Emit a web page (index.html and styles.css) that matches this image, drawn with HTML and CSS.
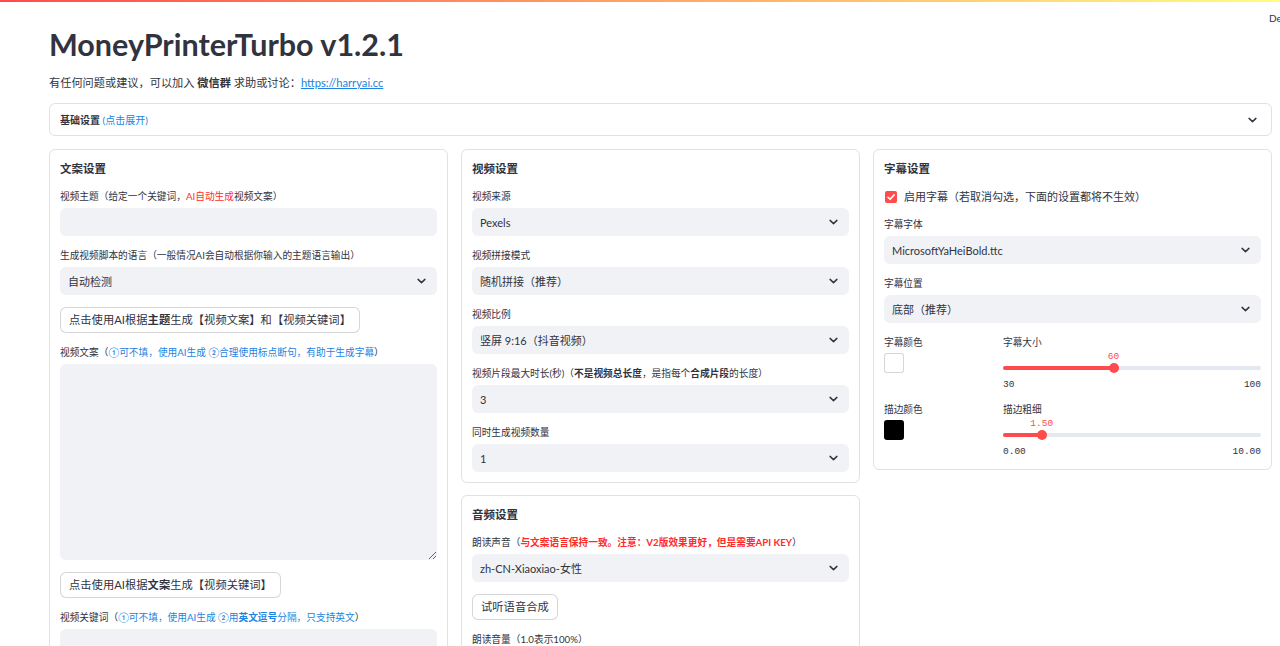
FILE: index.html
```html
<!DOCTYPE html>
<html lang="zh">
<head>
<meta charset="utf-8">
<title>MoneyPrinterTurbo</title>
<link rel="stylesheet" href="styles.css">
</head>
<body>
<div class="decoration"></div>
<div class="toolbar"><span class="deploy">Deploy</span></div>
<main class="main">
  <h1 class="title">MoneyPrinterTurbo v1.2.1</h1>
  <p class="intro">有任何问题或建议，可以加入 <b>微信群</b> 求助或讨论：<a class="link" href="#">https://harryai.cc</a></p>

  <div class="expander">
    <span class="exp-title"><b>基础设置</b> <span class="blue">(点击展开)</span></span>
    <svg class="chev" viewBox="0 0 10 6" width="9" height="6"><path d="M1.2 1.2l3.8 3.6 3.8-3.6" fill="none" stroke="#31333f" stroke-width="1.6" stroke-linecap="round" stroke-linejoin="round"/></svg>
  </div>

  <div class="columns">
    <!-- left column -->
    <div class="col">
      <section class="card">
        <h3 class="card-title">文案设置</h3>
        <div class="field">
          <div class="label">视频主题（给定一个关键词，<span class="red">AI自动生成</span>视频文案）</div>
          <div class="input"></div>
        </div>
        <div class="field">
          <div class="label">生成视频脚本的语言（一般情况AI会自动根据你输入的主题语言输出）</div>
          <div class="select"><span>自动检测</span><svg class="chev" viewBox="0 0 10 6" width="9" height="6"><path d="M1.2 1.2l3.8 3.6 3.8-3.6" fill="none" stroke="#31333f" stroke-width="1.6" stroke-linecap="round" stroke-linejoin="round"/></svg></div>
        </div>
        <button class="btn">点击使用AI根据<b>主题</b>生成【视频文案】和【视频关键词】</button>
        <div class="field">
          <div class="label">视频文案（<span class="blue">①可不填，使用AI生成 ②合理使用标点断句，有助于生成字幕</span>）</div>
          <textarea class="textarea"></textarea>
        </div>
        <button class="btn">点击使用AI根据<b>文案</b>生成【视频关键词】</button>
        <div class="field">
          <div class="label">视频关键词（<span class="blue">①可不填，使用AI生成 ②用<b>英文逗号</b>分隔，只支持英文</span>）</div>
          <div class="input tall"></div>
        </div>
      </section>
    </div>

    <!-- middle column -->
    <div class="col">
      <section class="card">
        <h3 class="card-title">视频设置</h3>
        <div class="field">
          <div class="label">视频来源</div>
          <div class="select"><span>Pexels</span><svg class="chev" viewBox="0 0 10 6" width="9" height="6"><path d="M1.2 1.2l3.8 3.6 3.8-3.6" fill="none" stroke="#31333f" stroke-width="1.6" stroke-linecap="round" stroke-linejoin="round"/></svg></div>
        </div>
        <div class="field">
          <div class="label">视频拼接模式</div>
          <div class="select"><span>随机拼接（推荐）</span><svg class="chev" viewBox="0 0 10 6" width="9" height="6"><path d="M1.2 1.2l3.8 3.6 3.8-3.6" fill="none" stroke="#31333f" stroke-width="1.6" stroke-linecap="round" stroke-linejoin="round"/></svg></div>
        </div>
        <div class="field">
          <div class="label">视频比例</div>
          <div class="select"><span>竖屏 9:16（抖音视频）</span><svg class="chev" viewBox="0 0 10 6" width="9" height="6"><path d="M1.2 1.2l3.8 3.6 3.8-3.6" fill="none" stroke="#31333f" stroke-width="1.6" stroke-linecap="round" stroke-linejoin="round"/></svg></div>
        </div>
        <div class="field">
          <div class="label">视频片段最大时长(秒)（<b>不是视频总长度</b>，是指每个<b>合成片段</b>的长度）</div>
          <div class="select"><span>3</span><svg class="chev" viewBox="0 0 10 6" width="9" height="6"><path d="M1.2 1.2l3.8 3.6 3.8-3.6" fill="none" stroke="#31333f" stroke-width="1.6" stroke-linecap="round" stroke-linejoin="round"/></svg></div>
        </div>
        <div class="field">
          <div class="label">同时生成视频数量</div>
          <div class="select"><span>1</span><svg class="chev" viewBox="0 0 10 6" width="9" height="6"><path d="M1.2 1.2l3.8 3.6 3.8-3.6" fill="none" stroke="#31333f" stroke-width="1.6" stroke-linecap="round" stroke-linejoin="round"/></svg></div>
        </div>
      </section>

      <section class="card">
        <h3 class="card-title">音频设置</h3>
        <div class="field">
          <div class="label">朗读声音（<b class="red">与文案语言保持一致。注意：V2版效果更好，但是需要API KEY</b>）</div>
          <div class="select"><span>zh-CN-Xiaoxiao-女性</span><svg class="chev" viewBox="0 0 10 6" width="9" height="6"><path d="M1.2 1.2l3.8 3.6 3.8-3.6" fill="none" stroke="#31333f" stroke-width="1.6" stroke-linecap="round" stroke-linejoin="round"/></svg></div>
        </div>
        <button class="btn">试听语音合成</button>
        <div class="field">
          <div class="label">朗读音量（1.0表示100%）</div>
          <div class="select"><span>1.0</span><svg class="chev" viewBox="0 0 10 6" width="9" height="6"><path d="M1.2 1.2l3.8 3.6 3.8-3.6" fill="none" stroke="#31333f" stroke-width="1.6" stroke-linecap="round" stroke-linejoin="round"/></svg></div>
        </div>
      </section>
    </div>

    <!-- right column -->
    <div class="col">
      <section class="card card-sub">
        <h3 class="card-title">字幕设置</h3>
        <div class="check-row">
          <span class="checkbox"><svg viewBox="0 0 12 12" width="12" height="12"><path d="M3 6.2l2.1 2.1 4-4.4" fill="none" stroke="#fff" stroke-width="1.6" stroke-linecap="round" stroke-linejoin="round"/></svg></span>
          <span>启用字幕（若取消勾选，下面的设置都将不生效）</span>
        </div>
        <div class="field">
          <div class="label">字幕字体</div>
          <div class="select"><span>MicrosoftYaHeiBold.ttc</span><svg class="chev" viewBox="0 0 10 6" width="9" height="6"><path d="M1.2 1.2l3.8 3.6 3.8-3.6" fill="none" stroke="#31333f" stroke-width="1.6" stroke-linecap="round" stroke-linejoin="round"/></svg></div>
        </div>
        <div class="field">
          <div class="label">字幕位置</div>
          <div class="select"><span>底部（推荐）</span><svg class="chev" viewBox="0 0 10 6" width="9" height="6"><path d="M1.2 1.2l3.8 3.6 3.8-3.6" fill="none" stroke="#31333f" stroke-width="1.6" stroke-linecap="round" stroke-linejoin="round"/></svg></div>
        </div>
        <div class="subgrid">
          <div class="field">
            <div class="label">字幕颜色</div>
            <div class="swatch swatch-white"></div>
          </div>
          <div class="slider">
            <div class="label">字幕大小</div>
            <div class="value-area"><span class="value" style="left:42.857%">60</span></div>
            <div class="track">
              <div class="rail"></div>
              <div class="fill" style="width:42.857%"></div>
              <div class="thumb" style="left:42.857%"></div>
            </div>
            <div class="ticks"><span>30</span><span>100</span></div>
          </div>
          <div class="field">
            <div class="label">描边颜色</div>
            <div class="swatch swatch-black"></div>
          </div>
          <div class="slider">
            <div class="label">描边粗细</div>
            <div class="value-area"><span class="value" style="left:15%">1.50</span></div>
            <div class="track">
              <div class="rail"></div>
              <div class="fill" style="width:15%"></div>
              <div class="thumb" style="left:15%"></div>
            </div>
            <div class="ticks"><span>0.00</span><span>10.00</span></div>
          </div>
        </div>
      </section>
    </div>
  </div>
</main>
</body>
</html>
```

FILE: styles.css
```css
* { box-sizing: border-box; }

html, body {
  margin: 0;
  height: 100%;
  overflow: hidden;
}

body {
  font-family: "Lato", "Noto Sans CJK SC", sans-serif;
  color: #31333f;
  background: #ffffff;
}

.decoration {
  height: 2px;
  background: linear-gradient(90deg, #ff4b4b, #fffd80);
}

.toolbar {
  position: absolute;
  top: 11px;
  left: 1269px;
  font-size: 10px;
  line-height: 14px;
  white-space: nowrap;
  color: #31333f;
}

.main {
  padding: 22px 8px 0 49px;
}

.title {
  margin: 0;
  font-size: 30.5px;
  line-height: 40px;
  font-weight: 700;
  color: #31333f;
}

.intro {
  margin: 11px 0 0;
  font-size: 11.2px;
  line-height: 16px;
}

.intro b { font-weight: 700; }

.link {
  color: #1c83e1;
  text-decoration: underline;
}

.blue { color: #1c83e1; }
.red { color: #ff2b2b; }

.expander {
  margin-top: 12px;
  height: 33px;
  border: 1px solid rgba(49, 51, 63, 0.15);
  border-radius: 6px;
  display: flex;
  align-items: center;
  justify-content: space-between;
  padding: 0 14px 0 10px;
  font-size: 10px;
  line-height: 14px;
}

.exp-title b { font-weight: 700; }

.columns {
  margin-top: 13px;
  display: grid;
  grid-template-columns: repeat(3, 1fr);
  column-gap: 13px;
  align-items: start;
}

.col {
  display: flex;
  flex-direction: column;
  gap: 12px;
}

.card {
  border: 1px solid rgba(49, 51, 63, 0.15);
  border-radius: 6px;
  padding: 10px 10px 10px;
  display: flex;
  flex-direction: column;
  gap: 13px;
}

.card-title {
  margin: 0;
  font-size: 11.5px;
  line-height: 17px;
  font-weight: 700;
}

.field {
  display: flex;
  flex-direction: column;
}

.label {
  font-size: 9.7px;
  line-height: 13px;
  margin-bottom: 5px;
  white-space: nowrap;
}

.label b { font-weight: 700; }

.input {
  height: 28px;
  background: #f0f2f6;
  border-radius: 6px;
}

.input.tall { height: 60px; }

.select {
  height: 28px;
  background: #f0f2f6;
  border-radius: 6px;
  display: flex;
  align-items: center;
  justify-content: space-between;
  padding: 0 11px 0 8px;
  font-size: 11px;
}

.chev { display: block; flex: none; }

.textarea {
  display: block;
  width: 100%;
  height: 196px;
  background: #f0f2f6;
  border: none;
  border-radius: 6px;
  resize: vertical;
  margin: 0;
  font: inherit;
}

.btn {
  align-self: flex-start;
  height: 26px;
  margin-top: -1px;
  padding: 0 8px;
  background: #ffffff;
  border: 1px solid rgba(49, 51, 63, 0.2);
  border-radius: 6px;
  font-family: inherit;
  font-size: 11.3px;
  color: #31333f;
  line-height: 1;
  display: inline-flex;
  align-items: center;
}

.btn b { font-weight: 700; }

.check-row {
  display: flex;
  align-items: center;
  gap: 7px;
  font-size: 11px;
  line-height: 14px;
  padding-left: 1px;
  margin-bottom: 1px;
}

.checkbox {
  width: 12px;
  height: 12px;
  background: #ff4b4b;
  border-radius: 2px;
  display: flex;
  flex: none;
}

.subgrid {
  display: grid;
  grid-template-columns: 106px 1fr;
  column-gap: 13px;
  row-gap: 13px;
}

.subgrid .label { margin-bottom: 4px; }

.swatch {
  width: 20px;
  height: 20px;
  border-radius: 3px;
}

.swatch-white {
  background: #ffffff;
  border: 1px solid rgba(49, 51, 63, 0.2);
}

.swatch-black {
  background: #000000;
}

.slider .label { margin-bottom: 0; }

.value-area {
  position: relative;
  height: 14px;
}

.value {
  position: absolute;
  bottom: 1px;
  transform: translateX(-50%);
  font-family: "Liberation Mono", "DejaVu Sans Mono", monospace;
  font-size: 9.5px;
  line-height: 10px;
  color: #ff4b4b;
}

.track {
  position: relative;
  height: 10px;
}

.rail {
  position: absolute;
  left: 0;
  right: 0;
  top: 3px;
  height: 4px;
  border-radius: 2px;
  background: #e4e8ef;
}

.fill {
  position: absolute;
  left: 0;
  top: 3px;
  height: 4px;
  border-radius: 2px;
  background: #ff4b4b;
}

.thumb {
  position: absolute;
  top: 0;
  width: 10px;
  height: 10px;
  border-radius: 50%;
  background: #ff4b4b;
  transform: translateX(-50%);
}

.ticks {
  display: flex;
  justify-content: space-between;
  margin-top: 6px;
  font-family: "Liberation Mono", "DejaVu Sans Mono", monospace;
  font-size: 9.5px;
  line-height: 11px;
  color: #31333f;
}

.card-sub { padding-bottom: 12px; }
```
